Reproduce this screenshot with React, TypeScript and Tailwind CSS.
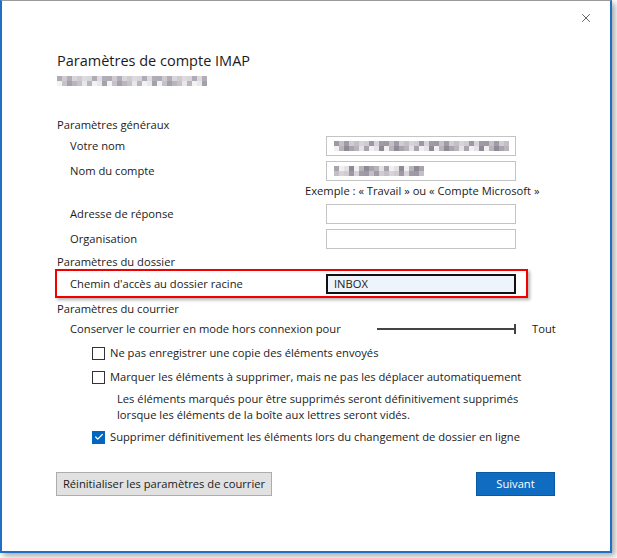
import { Check, X } from 'lucide-react';

const font = { fontFamily: '"Segoe UI", "Open Sans", sans-serif' };

// pixelated (redacted) text
const shades = ['#a8a3ad', '#d6d3d9', '#8f8a96', '#c2bfc6', '#e4e2e6', '#9d98a3', '#b8b4bc', '#cfcdd2', '#f0eff1', '#a09ba6'];

function Mosaic({ cols, seed = 1 }: { cols: number; seed?: number }) {
  const rows = [0, 1];
  return (
    <div className="flex flex-col">
      {rows.map((r) => (
        <div key={r} className="flex">
          {Array.from({ length: cols }).map((_, i) => (
            <span
              key={i}
              className="w-[5px] h-[5px]"
              style={{ backgroundColor: shades[(i * 7 + r * 3 + seed * 5 + ((i * i) % 4)) % shades.length] }}
            />
          ))}
        </div>
      ))}
    </div>
  );
}

function Field({ label, value, blur, focused }: { label: string; value?: string; blur?: number; focused?: boolean }) {
  return (
    <div className="flex items-center h-[25px]">
      <span className="w-[269px] pl-[13px]">{label}</span>
      {focused ? (
        <div className="w-[190px] h-[20px] border-2 border-[#111] bg-[#edf4fb] flex items-center px-[6px] text-[#222]">
          {value}
        </div>
      ) : (
        <div className="w-[190px] h-[20px] border border-[#c4c4c4] bg-white flex items-center pl-[7px] overflow-hidden">
          {blur ? <Mosaic cols={blur} seed={blur} /> : null}
        </div>
      )}
    </div>
  );
}

function Box({ checked, label }: { checked?: boolean; label: string }) {
  return (
    <div className="flex items-center h-[16px] pl-[35px]">
      {checked ? (
        <span className="w-[13px] h-[13px] bg-[#0067c0] flex items-center justify-center">
          <Check className="w-[10px] h-[10px] text-white" strokeWidth={3} />
        </span>
      ) : (
        <span className="w-[13px] h-[13px] border border-[#333] bg-white" />
      )}
      <span className="ml-[5px]">{label}</span>
    </div>
  );
}

export default function App() {
  return (
    <div className="w-[617px] h-[558px] bg-white overflow-hidden" style={font}>
      <div className="relative w-[612px] h-[553px] bg-white border-t border-t-[#9a9a9a] border-x-2 border-b-2 border-x-[#1f6fc5] border-b-[#1f6fc5] shadow-[3px_3px_6px_rgba(0,0,0,0.35)] text-[11.2px] text-[#1b1b1b] leading-[16px]">
        <button className="absolute top-[10px] right-[17px] text-[#333]">
          <X className="w-[14px] h-[14px]" strokeWidth={1.3} />
        </button>

        <div className="flex flex-col pl-[55px] pt-[50px]">
          <h1 className="text-[14.5px] leading-[20px] text-[#1b1b1b]">Paramètres de compte IMAP</h1>
          <div className="mt-[2px] h-[16px] flex items-center opacity-80">
            <Mosaic cols={30} seed={3} />
          </div>

          <div className="mt-[28px] h-[16px]">Paramètres généraux</div>
          <Field label="Votre nom" blur={35} />
          <Field label="Nom du compte" blur={18} />
          <div className="h-[16px] pl-[248px] whitespace-nowrap">Exemple : « Travail » ou « Compte Microsoft »</div>
          <div className="mt-[2px]">
            <Field label="Adresse de réponse" />
            <Field label="Organisation" />
          </div>

          <div className="mt-[3px] h-[15px] leading-[16px]">Paramètres du dossier</div>
          <div className="-ml-[2px] w-[473px] h-[29px] border-2 border-[#f00000] shadow-[2px_2px_3px_rgba(0,0,0,0.3)] flex items-center">
            <Field label="Chemin d'accès au dossier racine" value="INBOX" focused />
          </div>

          <div className="mt-[3px] h-[16px]">Paramètres du courrier</div>
          <div className="mt-[4px] h-[16px] flex items-center pl-[13px]">
            <span className="w-[307px]">Conserver le courrier en mode hors connexion pour</span>
            <div className="w-[139px] h-[2px] bg-[#444] relative">
              <span className="absolute right-0 -top-[4px] w-[2px] h-[10px] bg-[#444]" />
            </div>
            <span className="ml-[16px]">Tout</span>
          </div>
          <div className="mt-[8px]">
            <Box label="Ne pas enregistrer une copie des éléments envoyés" />
          </div>
          <div className="mt-[8px]">
            <Box label="Marquer les éléments à supprimer, mais ne pas les déplacer automatiquement" />
          </div>
          <div className="mt-[6px] pl-[60px] leading-[16px]">
            <div>Les éléments marqués pour être supprimés seront définitivement supprimés</div>
            <div>lorsque les éléments de la boîte aux lettres seront vidés.</div>
          </div>
          <div className="mt-[6px]">
            <Box checked label="Supprimer définitivement les éléments lors du changement de dossier en ligne" />
          </div>

          <div className="mt-[27px] flex items-center">
            <button className="-ml-[1px] w-[216px] h-[24px] bg-[#e1e1e1] border border-[#adadad] text-[#1b1b1b]">
              Réinitialiser les paramètres de courrier
            </button>
            <button className="ml-[204px] w-[79px] h-[24px] bg-[#0f6cc0] border border-[#0a5aa3] text-white">
              Suivant
            </button>
          </div>
        </div>
      </div>
    </div>
  );
}
